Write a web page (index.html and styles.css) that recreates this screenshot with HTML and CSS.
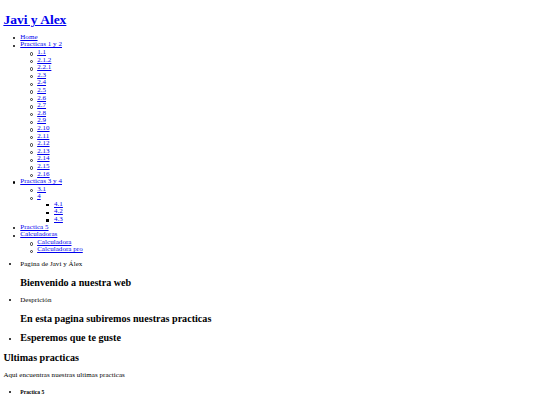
FILE: index.html
```html
<!DOCTYPE html>
<html lang="es">
<head>
<meta charset="utf-8">
<title>Javi y Alex</title>
<link rel="stylesheet" href="styles.css">
</head>
<body class="page">
<header class="site-header">
  <h1 class="site-title"><a href="#">Javi y Alex</a></h1>
  <nav class="site-nav">
    <ul class="menu">
      <li><a href="#">Home</a></li>
      <li><a href="#">Practicas 1 y 2</a>
        <ul class="submenu">
          <li><a href="#">1.1</a></li>
          <li><a href="#">2.1.2</a></li>
          <li><a href="#">2.2.1</a></li>
          <li><a href="#">2.3</a></li>
          <li><a href="#">2.4</a></li>
          <li><a href="#">2.5</a></li>
          <li><a href="#">2.6</a></li>
          <li><a href="#">2.7</a></li>
          <li><a href="#">2.8</a></li>
          <li><a href="#">2.9</a></li>
          <li><a href="#">2.10</a></li>
          <li><a href="#">2.11</a></li>
          <li><a href="#">2.12</a></li>
          <li><a href="#">2.13</a></li>
          <li><a href="#">2.14</a></li>
          <li><a href="#">2.15</a></li>
          <li><a href="#">2.16</a></li>
        </ul>
      </li>
      <li><a href="#">Practicas 3 y 4</a>
        <ul class="submenu">
          <li><a href="#">3.1</a></li>
          <li><a href="#">4</a>
            <ul class="subsubmenu">
              <li><a href="#">4.1</a></li>
              <li><a href="#">4.2</a></li>
              <li><a href="#">4.3</a></li>
            </ul>
          </li>
        </ul>
      </li>
      <li><a href="#">Practica 5</a></li>
      <li><a href="#">Calculadoras</a>
        <ul class="submenu">
          <li><a href="#">Calculadora</a></li>
          <li><a href="#">Calculadora pro</a></li>
        </ul>
      </li>
    </ul>
  </nav>
</header>
<main class="content">
  <ul class="intro">
    <li>Pagina de Javi y Álex
      <h2 class="intro-heading">Bienvenido a nuestra web</h2>
    </li>
    <li>Desprición
      <h2 class="intro-heading">En esta pagina subiremos nuestras practicas</h2>
    </li>
    <li><h2 class="intro-heading">Esperemos que te guste</h2></li>
  </ul>
  <section class="latest">
    <h2 class="latest-title">Ultimas practicas</h2>
    <p class="latest-text">Aqui encuentras nuestras ultimas practicas</p>
    <ul class="latest-list">
      <li><h5 class="latest-item">Practica 5</h5></li>
    </ul>
  </section>
</main>
</body>
</html>
```
FILE: styles.css
```css
.page {
  margin: 3.375px;
  font-family: "Liberation Serif", "Times New Roman", serif;
  font-size: 7px;
  line-height: 7.594px;
  letter-spacing: 0.05px;
  color: #000;
  background: #fff;
}
a {
  color: #0000ee;
}
.site-title {
  font-size: 13.5px;
  line-height: 1.125;
  letter-spacing: 0;
  margin: 8.5px 0 5.5px;
}
.menu, .intro, .latest-list {
  list-style: disc;
  padding-left: 16.875px;
  margin: 6.75px 0;
}
.menu, .submenu, .subsubmenu {
  list-style: none;
}
.submenu, .subsubmenu {
  padding-left: 16.875px;
  margin: 0;
}
.menu li {
  position: relative;
}
.menu li::before {
  content: "";
  position: absolute;
  left: -7.6px;
  top: 3.3px;
  width: 2.2px;
  height: 2.2px;
  border-radius: 50%;
  background: #000;
}
.submenu li::before {
  left: -7.4px;
  width: 1.4px;
  height: 1.4px;
  border: 0.5px solid #333;
  background: transparent;
}
.subsubmenu li::before {
  left: -7.6px;
  border: 0;
  border-radius: 0;
  width: 2.2px;
  height: 2.2px;
  background: #000;
}
.intro-heading, .latest-title {
  font-size: 10.125px;
  line-height: 1.125;
  letter-spacing: 0;
  margin: 8.4px 0;
}
.latest-text {
  margin: 6.75px 0;
}
.latest-item {
  font-size: 5.6px;
  line-height: 1.125;
  letter-spacing: 0;
  margin: 9.4px 0;
}
```
